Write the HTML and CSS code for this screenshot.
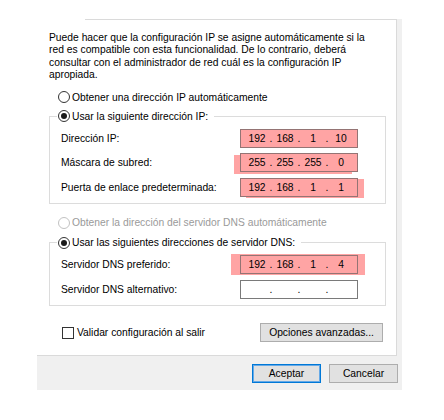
FILE: index.html
```html
<!DOCTYPE html>
<html lang="es">
<head>
<meta charset="utf-8">
<title>Propiedades: Protocolo de Internet versión 4 (TCP/IPv4)</title>
<link rel="stylesheet" href="styles.css">
</head>
<body>
<div class="dialog">
  <div class="panel">
    <div class="tabline"></div>
    <div class="content">
      <p class="intro">Puede hacer que la configuración IP se asigne automáticamente si la<br>red es compatible con esta funcionalidad. De lo contrario, deberá<br>consultar con el administrador de red cuál es la configuración IP<br>apropiada.</p>

      <div class="option first"><span class="radio"></span><span>Obtener una dirección IP automáticamente</span></div>

      <fieldset class="group g1">
        <legend><span class="option"><span class="radio checked"></span><span>Usar la siguiente dirección IP:</span></span></legend>
        <div class="rows">
          <div class="row">
            <span class="label">Dirección IP:</span>
            <div class="ip hl"><span class="oct">192</span><span class="dot">.</span><span class="oct">168</span><span class="dot">.</span><span class="oct">1</span><span class="dot">.</span><span class="oct">10</span></div>
          </div>
          <div class="row">
            <span class="label">Máscara de subred:</span>
            <div class="ip hl hl-left"><span class="oct">255</span><span class="dot">.</span><span class="oct">255</span><span class="dot">.</span><span class="oct">255</span><span class="dot">.</span><span class="oct">0</span></div>
          </div>
          <div class="row">
            <span class="label">Puerta de enlace predeterminada:</span>
            <div class="ip hl hl-right"><span class="oct">192</span><span class="dot">.</span><span class="oct">168</span><span class="dot">.</span><span class="oct">1</span><span class="dot">.</span><span class="oct">1</span></div>
          </div>
        </div>
      </fieldset>

      <div class="option disabled dns-auto"><span class="radio"></span><span>Obtener la dirección del servidor DNS automáticamente</span></div>

      <fieldset class="group g2">
        <legend><span class="option"><span class="radio checked"></span><span>Usar las siguientes direcciones de servidor DNS:</span></span></legend>
        <div class="rows">
          <div class="row">
            <span class="label">Servidor DNS preferido:</span>
            <div class="ip hl hl-both"><span class="oct">192</span><span class="dot">.</span><span class="oct">168</span><span class="dot">.</span><span class="oct">1</span><span class="dot">.</span><span class="oct">4</span></div>
          </div>
          <div class="row">
            <span class="label">Servidor DNS alternativo:</span>
            <div class="ip"><span class="oct"></span><span class="dot">.</span><span class="oct"></span><span class="dot">.</span><span class="oct"></span><span class="dot">.</span><span class="oct"></span></div>
          </div>
        </div>
      </fieldset>

      <div class="bottom-row">
        <div class="option check-opt"><span class="checkbox"></span><span>Validar configuración al salir</span></div>
        <button class="btn adv">Opciones avanzadas...</button>
      </div>
    </div>
  </div>
  <div class="footer">
    <button class="btn default">Aceptar</button>
    <button class="btn">Cancelar</button>
  </div>
</div>
</body>
</html>
```

FILE: styles.css
```css
* { box-sizing: border-box; }

html, body {
  margin: 0;
  padding: 0;
  background: #ffffff;
}

body {
  font-family: "Liberation Sans", Arial, sans-serif;
  font-size: 10.3px;
  color: #000;
}

.dialog {
  margin: 19px 0 0 37px;
  width: 365px;
  background: #f0f0f0;
}

.panel {
  width: 360px;
  background: #ffffff;
  border-right: 1px solid #dadada;
  border-bottom: 1px solid #dadada;
}

.tabline {
  margin-left: 48px;
  border-top: 1px solid #dadada;
}

.content {
  padding: 0 10px 13px 12px;
}

.intro {
  margin: 12px 0 0 0;
  line-height: 12.4px;
}

.option {
  display: flex;
  align-items: center;
  height: 15px;
  gap: 2px;
  white-space: nowrap;
}

.option.first {
  margin: 8px 0 0 9px;
}

.radio {
  width: 12px;
  height: 12px;
  border-radius: 50%;
  border: 1px solid #333333;
  background: #fff;
  display: inline-flex;
  align-items: center;
  justify-content: center;
  flex: none;
}

.radio.checked::after {
  content: "";
  width: 6px;
  height: 6px;
  border-radius: 50%;
  background: #1a1a1a;
}

.option.disabled {
  color: #9a9a9a;
}

.option.disabled .radio {
  border-color: #c2c2c2;
}

.group {
  margin: 4px 0 0 0;
  padding: 5px 0 6px 0;
  border: 1px solid #dcdcdc;
  min-inline-size: 0;
}

.group legend {
  margin-left: 7px;
  padding: 0 6px 0 1px;
}

.rows {
  display: flex;
  flex-direction: column;
  gap: 5.5px;
  padding: 0 0 0 11px;
}

.row {
  display: flex;
  align-items: center;
  height: 19px;
}

.label {
  width: 179px;
  flex: none;
}

.ip {
  width: 118px;
  height: 19px;
  border: 1px solid #7a7a7a;
  background: #fff;
  display: flex;
  align-items: center;
  padding-left: 4px;
}

.oct {
  width: 24px;
  text-align: center;
}

.dot {
  width: 4px;
  text-align: center;
}

.ip.hl {
  background: #ffa4a4;
  border-color: #947474;
}

.ip.hl-left {
  box-shadow: -6px 2px 0 0 #ffa4a4;
}

.ip.hl-right {
  box-shadow: 6px 1px 0 0 #ffa4a4;
}

.ip.hl-both {
  box-shadow: -8px 0 0 1px #ffa4a4, 6px 0 0 1px #ffa4a4;
}

.dns-auto {
  margin: 11.5px 0 0 9px;
}

.g2 {
  margin-top: 5px;
}

.bottom-row {
  margin-top: 17.5px;
  display: flex;
  align-items: center;
  justify-content: space-between;
  padding-right: 3px;
}

.check-opt {
  margin-left: 13px;
  gap: 3px;
}

.checkbox {
  width: 12px;
  height: 12px;
  border: 1px solid #333333;
  background: #fff;
  flex: none;
}

.btn {
  font-family: inherit;
  font-size: 10.3px;
  color: #000;
  height: 19px;
  padding: 0;
  background: #e1e1e1;
  border: 1px solid #adadad;
  border-radius: 0;
}

.btn.adv {
  width: 123px;
}

.footer {
  display: flex;
  justify-content: flex-end;
  gap: 8px;
  padding: 8px 4px 7px 0;
}

.footer .btn {
  width: 69px;
}

.btn.default {
  border-color: #0078d7;
  box-shadow: inset 0 0 0 1px #66a9e6;
}
```
